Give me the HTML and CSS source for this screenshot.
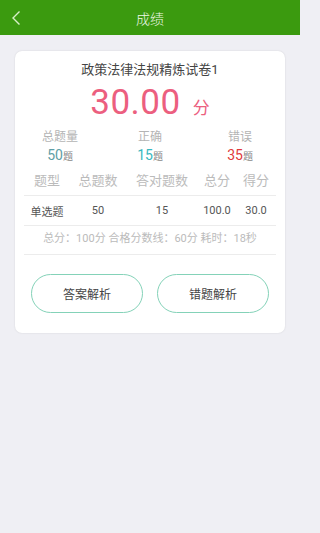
FILE: index.html
```html
<!DOCTYPE html>
<html lang="zh">
<head>
<meta charset="utf-8">
<title>成绩</title>
<link rel="stylesheet" href="styles.css">
</head>
<body>
<header class="topbar">
  <span class="back">
    <svg width="10" height="16" viewBox="0 0 10 16"><path d="M8.5 1.5 L2 8 L8.5 14.5" fill="none" stroke="#d8f0c8" stroke-width="1.4"/></svg>
  </span>
  <h1 class="title">成绩</h1>
</header>
<main class="page">
  <section class="card">
    <div class="paper">政策法律法规精炼试卷1</div>
    <div class="score"><span class="num">30.00</span><span class="unit">分</span></div>
    <div class="stats">
      <div class="stat"><div class="lbl">总题量</div><div class="val v-total">50<small>题</small></div></div>
      <div class="stat"><div class="lbl">正确</div><div class="val v-right">15<small>题</small></div></div>
      <div class="stat"><div class="lbl">错误</div><div class="val v-wrong">35<small>题</small></div></div>
    </div>
    <div class="table">
      <div class="row head"><span>题型</span><span>总题数</span><span>答对题数</span><span>总分</span><span>得分</span></div>
      <div class="row body"><span>单选题</span><span>50</span><span>15</span><span>100.0</span><span>30.0</span></div>
    </div>
    <div class="summary">总分：100分 合格分数线：60分 耗时：18秒</div>
    <div class="actions">
      <button class="btn">答案解析</button>
      <button class="btn">错题解析</button>
    </div>
  </section>
</main>
</body>
</html>
```
FILE: styles.css
```css
* { box-sizing: border-box; }
html, body { margin: 0; padding: 0; }
body {
  width: 300px;
  height: 533px;
  background: #efeff4;
  font-family: Roboto, "Noto Sans CJK SC", sans-serif;
  overflow: hidden;
}
.topbar {
  height: 35px;
  background: #3b9a0f;
  display: flex;
  align-items: center;
  justify-content: center;
  position: relative;
}
.back {
  position: absolute;
  left: 11px;
  top: 10px;
  display: flex;
}
.title {
  margin: 0;
  font-size: 14px;
  font-weight: 300;
  color: #eef8e8;
}
.page {
  padding: 16px 15px 0;
}
.card {
  background: #fff;
  border-radius: 7px;
  box-shadow: 0 0 2px rgba(0,0,0,0.12);
  padding: 9px 9px 20px;
}
.paper {
  text-align: center;
  font-size: 13px;
  color: #444;
  line-height: 20px;
}
.score {
  display: flex;
  justify-content: center;
  align-items: baseline;
  color: #ec5f7f;
  height: 44px;
  margin-top: 1px;
}
.score .num {
  font-size: 35px;
  line-height: 44px;
  letter-spacing: 0.5px;
}
.score .unit {
  font-size: 17px;
  margin-left: 12px;
}
.stats {
  display: grid;
  grid-template-columns: repeat(3, 90px);
  margin: 3px -9px 0;
}
.stat { text-align: center; }
.lbl {
  font-size: 12px;
  color: #b4b4b4;
  line-height: 18px;
}
.val {
  font-size: 14px;
  line-height: 18px;
}
.val small {
  font-size: 10px;
  color: #888;
}
.v-total { color: #5e9ea6; }
.v-right { color: #38b8c0; }
.v-wrong { color: #e03a3a; }
.row {
  display: grid;
  grid-template-columns: 46px 56px 72px 38px 40px;
  text-align: center;
  align-items: center;
  border-bottom: 1px solid #ececec;
}
.row.head {
  font-size: 13px;
  color: #bbb;
  height: 30px;
  padding-bottom: 2px;
}
.row.body {
  font-size: 11px;
  color: #555;
  height: 30px;
}
.summary {
  text-align: center;
  font-size: 11px;
  color: #bbb;
  height: 29px;
  line-height: 26px;
  border-bottom: 1px solid #ececec;
}
.actions {
  display: flex;
  gap: 14px;
  padding: 0 7px;
  margin-top: 19px;
}
.btn {
  flex: 1;
  height: 39px;
  background: #fff;
  border: 1.5px solid #84d2b8;
  border-radius: 20px;
  font-family: Roboto, "Noto Sans CJK SC", sans-serif;
  font-size: 12px;
  color: #444;
  padding: 0;
}
```
